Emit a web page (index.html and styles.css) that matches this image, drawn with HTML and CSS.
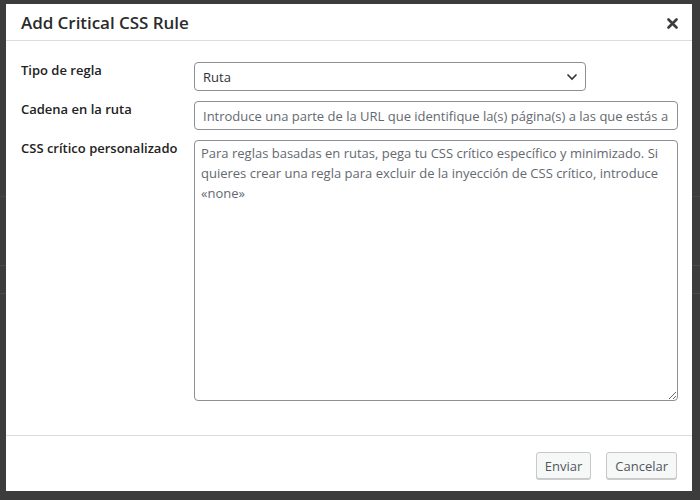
FILE: index.html
```html
<!DOCTYPE html>
<html lang="es">
<head>
<meta charset="utf-8">
<title>Add Critical CSS Rule</title>
<link rel="stylesheet" href="styles.css">
</head>
<body>
<div class="modal">
  <div class="modal-header">
    <h1 class="modal-title">Add Critical CSS Rule</h1>
    <button class="close" type="button" aria-label="Cerrar">
      <svg width="11" height="11" viewBox="0 0 11 11"><path d="M1.5 1.5 L9.5 9.5 M9.5 1.5 L1.5 9.5" stroke="#3d3d3d" stroke-width="2.6" stroke-linecap="round"/></svg>
    </button>
  </div>
  <div class="modal-body">
    <div class="row">
      <label class="label">Tipo de regla</label>
      <div class="select">
        <span>Ruta</span>
        <svg class="chev" width="12" height="8" viewBox="0 0 12 8"><path d="M1.5 1.5 L6 6 L10.5 1.5" fill="none" stroke="#333" stroke-width="1.6"/></svg>
      </div>
    </div>
    <div class="row">
      <label class="label">Cadena en la ruta</label>
      <input class="input" type="text" placeholder="Introduce una parte de la URL que identifique la(s) página(s) a las que estás aplicando esta regla">
    </div>
    <div class="row">
      <label class="label">CSS crítico personalizado</label>
      <textarea class="textarea" placeholder="Para reglas basadas en rutas, pega tu CSS crítico específico y minimizado. Si quieres crear una regla para excluir de la inyección de CSS crítico, introduce «none»"></textarea>
    </div>
  </div>
  <div class="modal-footer">
    <button class="btn" type="button">Enviar</button>
    <button class="btn" type="button">Cancelar</button>
  </div>
</div>
</body>
</html>
```
FILE: styles.css
```css
html, body {
  margin: 0;
  padding: 0;
}
body {
  width: 700px;
  height: 500px;
  overflow: hidden;
  background-color: #3c3c3c;
  background-image:
    linear-gradient(to bottom, transparent 265px, #4a4a4a 265px, #4a4a4a 266px, transparent 266px),
    linear-gradient(to bottom, transparent 293px, #4a4a4a 293px, #4a4a4a 294px, transparent 294px),
    linear-gradient(to bottom, transparent 196px, #474747 196px, #474747 197px, transparent 197px);
  font-family: "Open Sans", "Noto Sans", sans-serif;
  color: #222;
  padding-top: 4px;
  padding-left: 6px;
  box-sizing: border-box;
}
.modal {
  width: 686px;
  height: 487px;
  background: #fff;
  display: flex;
  flex-direction: column;
}
.modal-header {
  height: 36px;
  border-bottom: 1px solid #dcdcdc;
  display: flex;
  align-items: center;
  justify-content: space-between;
  padding: 0 14px 0 15px;
}
.modal-title {
  margin: 0;
  font-size: 17px;
  font-weight: 600;
  color: #2b2b2b;
  letter-spacing: -0.05px;
  padding-top: 1px;
}
.close {
  border: 0;
  background: none;
  padding: 0;
  width: 12px;
  height: 12px;
  display: flex;
  align-items: center;
  justify-content: center;
  margin-top: 2px;
}
.modal-body {
  flex: 1;
  padding: 21px 14px 0 15px;
  display: flex;
  flex-direction: column;
  gap: 10px;
}
.row {
  display: grid;
  grid-template-columns: 173px 1fr;
  align-items: start;
}
.label {
  font-size: 13px;
  font-weight: 600;
  color: #222;
  line-height: 16px;
  padding-top: 0;
}
.select, .input, .textarea {
  box-sizing: border-box;
  border: 1px solid #8c8f94;
  border-radius: 4px;
  background: #fff;
  font-family: "Open Sans", "Noto Sans", sans-serif;
  font-size: 13px;
}
.select {
  width: 392px;
  height: 29px;
  display: flex;
  align-items: center;
  justify-content: space-between;
  padding: 1px 7px 0 8px;
  color: #2c3338;
}
.chev {
  margin-top: -1px;
}
.input {
  width: 484px;
  height: 29px;
  padding: 0 8px;
  color: #2c3338;
  outline: none;
}
.input::placeholder, .textarea::placeholder {
  color: #646970;
  opacity: 1;
}
.textarea {
  width: 484px;
  height: 261px;
  padding: 2px 6px;
  line-height: 20px;
  resize: vertical;
  outline: none;
  display: block;
  margin: 0;
}
.modal-footer {
  height: 56px;
  border-top: 1px solid #dcdcdc;
  display: flex;
  justify-content: flex-end;
  align-items: flex-start;
  gap: 15px;
  padding: 16px 15px 0 0;
  box-sizing: border-box;
}
.btn {
  height: 27px;
  border: 1px solid #c8c8c8;
  border-radius: 3px;
  background: #f6f7f7;
  color: #50575e;
  font-family: "Open Sans", "Noto Sans", sans-serif;
  font-size: 13px;
  padding: 0 8px;
  box-shadow: 0 1px 0 #ccc;
}
```
